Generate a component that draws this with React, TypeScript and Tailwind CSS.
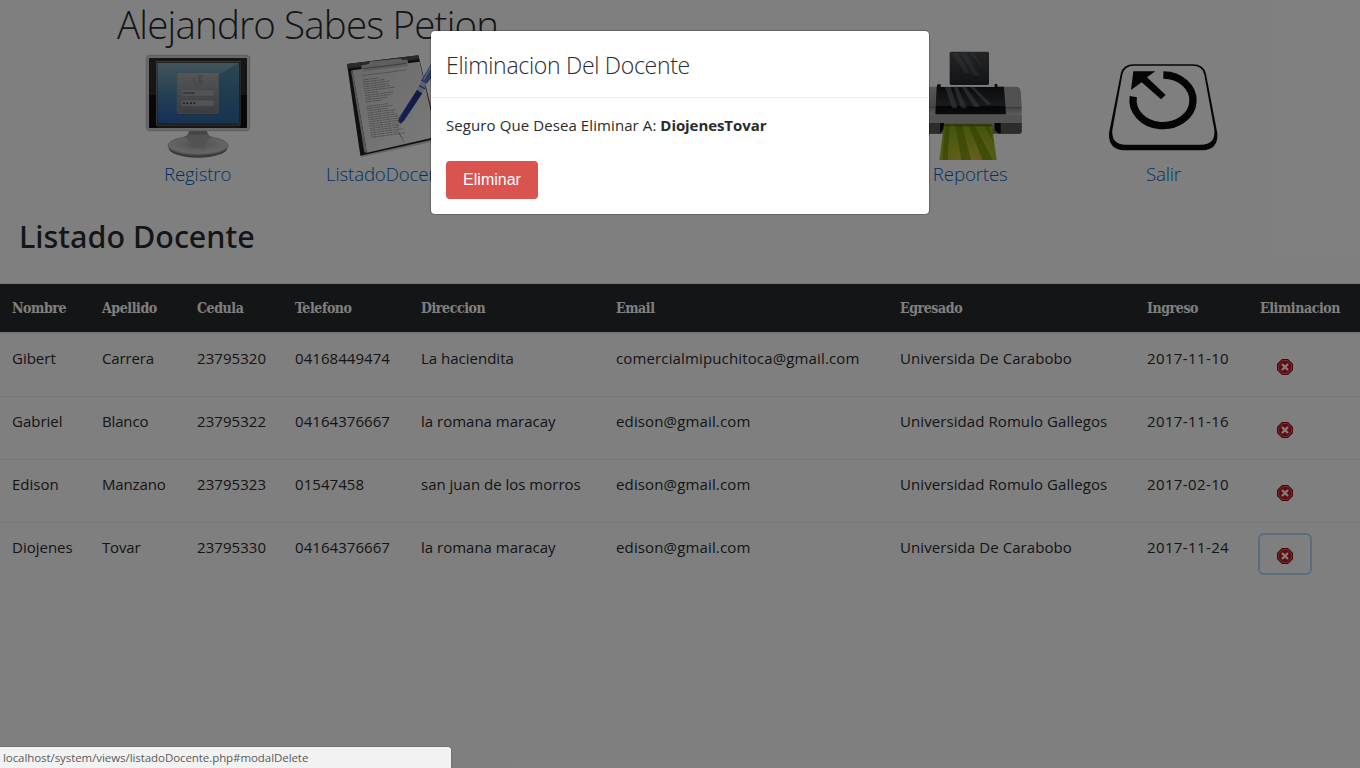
import type { ReactNode } from "react";

function MonitorIcon() {
  return (
    <svg width="120" height="112" viewBox="21 15 360 336">
      <defs>
        <linearGradient id="screen" x1="0" y1="0" x2="0" y2="1">
          <stop offset="0" stopColor="#86acb8" />
          <stop offset="0.5" stopColor="#4c80a8" />
          <stop offset="1" stopColor="#2c60b0" />
        </linearGradient>
        <linearGradient id="panel" x1="0" y1="0" x2="0" y2="1">
          <stop offset="0" stopColor="#a8acac" />
          <stop offset="1" stopColor="#74787c" />
        </linearGradient>
        <radialGradient id="base" cx="0.5" cy="0.4" r="0.6">
          <stop offset="0" stopColor="#a4a4a4" />
          <stop offset="0.8" stopColor="#cccccc" />
          <stop offset="1" stopColor="#989898" />
        </radialGradient>
      </defs>
      <ellipse cx="201" cy="309" rx="88" ry="29" fill="#707070" />
      <ellipse cx="201" cy="302" rx="90" ry="29" fill="url(#base)" stroke="#969696" strokeWidth="2" />
      <path d="M174 254H228Q228 270 244 276Q222 284 221 308H182Q180 284 158 276Q174 270 174 254Z" fill="#a4a4a4" />
      <path d="M174 256H228V269H174Z" fill="#8a8a8a" />
      <rect x="46" y="31" width="310" height="226" rx="10" fill="#d2d2d2" stroke="#bababa" strokeWidth="3" />
      <rect x="54" y="39" width="294" height="210" rx="4" fill="#2c2c2c" />
      <path d="M54 150H76V249H54ZM328 150H348V249H328Z" fill="#101010" />
      <rect x="76" y="50" width="251" height="190" fill="#111" stroke="#a0a0a0" strokeWidth="2" />
      <rect x="79" y="53" width="245" height="183" fill="url(#screen)" />
      <path d="M323 54V236H120Q270 190 262 90Z" fill="#2f6f98" opacity=".5" />
      <rect x="138" y="83" width="127" height="126" rx="4" fill="#345" opacity=".5" />
      <rect x="139" y="84" width="124" height="122" rx="4" fill="url(#panel)" stroke="#c0c0c0" strokeWidth="1" />
      <g fill="none" stroke="#888c8e" strokeWidth="5">
        <path d="M204 91V113M215 91L205 102L215 113" />
        <path d="M191 97A14 14 0 1 0 216 108" strokeDasharray="5 3" />
      </g>
      <rect x="150" y="134" width="100" height="19" rx="4" fill="#a4a6a8" stroke="#74787c" />
      <rect x="150" y="165" width="100" height="19" rx="4" fill="#a4a6a8" stroke="#74787c" />
      <path d="M157 144H191" stroke="#505558" strokeWidth="5" strokeDasharray="4 1" />
      <g fill="#333">
        <circle cx="159" cy="175" r="3" />
        <circle cx="169" cy="175" r="3" />
        <circle cx="180" cy="175" r="3" />
        <circle cx="190" cy="175" r="3" />
      </g>
    </svg>
  );
}

const PAPER_LINES = [132, 0, 46, 66, 80, 74, 78, 92, 40, 84, 76, 66, 50, 0, 66, 78, 60, 84, 78, 86, 92, 88, 96, 80, 90, 84, 96, 80, 100];

function ClipboardIcon() {
  return (
    <svg width="120" height="112" viewBox="60 15 360 336">
      <defs>
        <linearGradient id="pen" x1="0" y1="0" x2="1" y2="0.5">
          <stop offset="0" stopColor="#6c80d8" />
          <stop offset="0.5" stopColor="#2a3c9c" />
          <stop offset="1" stopColor="#1c2870" />
        </linearGradient>
        <linearGradient id="paper" x1="0" y1="0" x2="1" y2="1">
          <stop offset="0" stopColor="#d0d0d0" />
          <stop offset="1" stopColor="#f8f8f8" />
        </linearGradient>
      </defs>
      <path d="M112 62L324 36L385 286L150 337Z" fill="#000" opacity=".2" />
      <path d="M108 57L322 31L382 280L148 332Z" fill="#202020" />
      <path d="M108 57L322 31L324 42L112 70Z" fill="#555" />
      <path d="M124 76L326 50L377 275L168 323Z" fill="url(#paper)" />
      <path d="M124 76L168 323L160 322L120 78Z" fill="#b0b0b0" />
      <path d="M152 63L175 58L178 51L270 42L273 47L288 45L291 64L155 81Z" fill="#bdbdbd" stroke="#ddd" strokeWidth="2" />
      <path d="M158 71L286 55" stroke="#777" strokeWidth="3" />
      {PAPER_LINES.map((w, i) => (
        <path
          key={i}
          d={`M${153 + i} ${92 + i * 6.6}l${w} ${-w * 0.13}`}
          stroke="#8c8c8c"
          strokeWidth="2.4"
          strokeDasharray="6 1.5 9 2 4 1.5"
        />
      ))}
      <path d="M258 250L285 300L268 274Z" fill="#888" />
      <path d="M257 249L264 218L318 134L334 145L280 226Z" fill="url(#pen)" />
      <path d="M257 249L262 230L270 236Z" fill="#ddd" />
      <path d="M318 134L332 105L347 113L334 145Z" fill="#b8c4e0" />
      <path d="M325 122L343 132" stroke="#4056a0" strokeWidth="4" />
      <path d="M330 107L362 53L385 20L398 28L368 90L347 116Z" fill="#5276c8" />
      <path d="M338 104L375 40" stroke="#b0c8f0" strokeWidth="4" />
    </svg>
  );
}

function PrinterIcon() {
  return (
    <svg width="120" height="112" viewBox="-30 15 360 336">
      <defs>
        <linearGradient id="body" x1="0" y1="0" x2="0" y2="1">
          <stop offset="0" stopColor="#b0b0b0" />
          <stop offset="0.45" stopColor="#8c8c8c" />
          <stop offset="0.6" stopColor="#b8b8b8" />
          <stop offset="1" stopColor="#6e6e6e" />
        </linearGradient>
        <linearGradient id="tray" x1="0" y1="0" x2="0" y2="1">
          <stop offset="0" stopColor="#46494e" />
          <stop offset="1" stopColor="#25272b" />
        </linearGradient>
        <linearGradient id="front" x1="0" y1="0" x2="0" y2="1">
          <stop offset="0" stopColor="#101216" />
          <stop offset="0.7" stopColor="#34363c" />
          <stop offset="0.75" stopColor="#0b0c0e" />
          <stop offset="1" stopColor="#18191c" />
        </linearGradient>
        <radialGradient id="sheet" cx="0.5" cy="0.95" r="0.9">
          <stop offset="0" stopColor="#d0c040" />
          <stop offset="0.6" stopColor="#a0b420" />
          <stop offset="1" stopColor="#8cac18" />
        </radialGradient>
      </defs>
      <rect x="89" y="20" width="118" height="100" rx="5" fill="url(#tray)" />
      <path d="M93 24L115 24L150 84L135 84ZM120 23L137 23L178 92L162 92ZM150 23L160 23L195 76Z" fill="#72757a" opacity=".35" />
      <path d="M20 125H290Q300 126 302 140L305 190V260Q305 266 298 266H-2Q-10 266-10 260V190L-4 140Q-2 126 8 125Z" fill="url(#body)" />
      <path d="M255 126H290Q299 126 301 140L304 187H257Z" fill="#a2a2a2" />
      <path d="M-8 188H305" stroke="#666" strokeWidth="2" />
      <path d="M-8 210H305V235H-8Z" fill="#a6a6a6" />
      <path d="M224 234H305V258Q305 266 298 266H235L224 250ZM-10 234H72V250L60 266H-3Q-10 266-10 258Z" fill="#585858" />
      <path d="M224 234H242V265H235L224 255ZM72 234H60V265L72 250Z" fill="#0a0a0a" />
      <path d="M53 118H62V126H224V117H232V125H252L258 208H46L50 125Z" fill="url(#front)" />
      <path d="M75 126H92L112 190H97ZM101 125H112L140 190H124ZM125 125H137L180 186H163ZM150 125H161L213 177L204 181Z" fill="#777a80" opacity=".55" />
      <path d="M72 238H215L230 345H58Z" fill="url(#sheet)" />
      <path d="M76 238H89L83 345H67ZM105 238H126L153 345H124ZM144 238H162L219 345H188ZM190 238H205L221 290Z" fill="#648400" opacity=".6" />
      <path d="M72 238H215L216 244H71Z" fill="#445c10" opacity=".7" />
    </svg>
  );
}

function ExitIcon() {
  return (
    <svg width="120" height="112" viewBox="24 0 360 336">
      <path
        d="M117 43H293Q327 43 333 72L367 250Q370 300 322 301H88Q40 300 42 250L77 72Q83 43 117 43Z"
        fill="#0a0a0a"
      />
      <path
        d="M117 47H293Q322 47 328 74L358 240Q362 284 318 284H92Q48 284 52 240L82 74Q88 47 117 47Z"
        fill="#fff"
      />
      <path d="M205 75A90 76 0 1 1 115 140" fill="none" stroke="#0a0a0a" strokeWidth="22" />
      <path d="M115 64H181L156 82L212 135L198 148L140 97L108 120Z" fill="#0a0a0a" />
    </svg>
  );
}

function DeleteIcon() {
  return (
    <svg width="16" height="16" viewBox="0 0 16 16">
      <path d="M5 0H11L16 5V11L11 16H5L0 11V5Z" fill="#7c0c10" />
      <path d="M5.4 1H10.6L15 5.4V10.6L10.6 15H5.4L1 10.6V5.4Z" fill="#e46066" />
      <path d="M5.8 2H10.2L14 5.8V10.2L10.2 14H5.8L2 10.2V5.8Z" fill="#c4141c" />
      <path d="M5 5L11 11M11 5L5 11" stroke="#fff" strokeWidth="2.4" />
    </svg>
  );
}

function NavItem({ label, children }: { label: string; children: ReactNode }) {
  return (
    <a className="flex flex-col items-center text-[18.7px] leading-7 font-light tracking-[-0.15px] text-[#0263c0]">
      {children}
      <span className="-mt-0.5">{label}</span>
    </a>
  );
}

const HEADERS = ["Nombre", "Apellido", "Cedula", "Telefono", "Direccion", "Email", "Egresado", "Ingreso", "Eliminacion"];
const ROWS = [
  ["Gibert", "Carrera", "23795320", "04168449474", "La haciendita", "comercialmipuchitoca@gmail.com", "Universida De Carabobo", "2017-11-10"],
  ["Gabriel", "Blanco", "23795322", "04164376667", "la romana maracay", "edison@gmail.com", "Universidad Romulo Gallegos", "2017-11-16"],
  ["Edison", "Manzano", "23795323", "01547458", "san juan de los morros", "edison@gmail.com", "Universidad Romulo Gallegos", "2017-02-10"],
  ["Diojenes", "Tovar", "23795330", "04164376667", "la romana maracay", "edison@gmail.com", "Universida De Carabobo", "2017-11-24"],
];
const CELL_TRACKING = ["", "tracking-[-0.15px]", "tracking-[0.06px]", "tracking-[0.06px]", "", "tracking-[0.14px]", "tracking-[0.08px]", "tracking-[0.38px]"];
const COLUMNS = "grid grid-cols-[90px_95px_98px_126px_195px_284px_247px_113px_112px]";

export default function App() {
  return (
    <div className="relative h-[768px] w-[1360px] overflow-hidden bg-white font-['Open_Sans','Noto_Sans',sans-serif] text-[15px] leading-6 text-[#292b2c]">
      <header className="h-[190px]">
        <h1 className="h-[50px] pl-[117px] text-[38.5px] leading-[48px] font-light tracking-[-0.82px]">
          Alejandro Sabes Petion
        </h1>
        <nav className="ml-[101px] grid w-[1159px] grid-cols-6">
          <NavItem label="Registro"><MonitorIcon /></NavItem>
          <NavItem label="ListadoDocente"><ClipboardIcon /></NavItem>
          <span />
          <span />
          <NavItem label="Reportes"><PrinterIcon /></NavItem>
          <NavItem label="Salir"><ExitIcon /></NavItem>
        </nav>
      </header>
      <h2 className="h-[93px] pt-6 pl-[19px] font-['Noto_Sans',sans-serif] text-[30.5px] leading-[44px] font-medium">
        Listado Docente
      </h2>
      <div className="border-t border-[#eceeef]">
        <div className={`${COLUMNS} h-12 bg-[#292b2c] font-['DejaVu_Serif_Condensed','DejaVu_Serif',serif] text-[14px] leading-12 font-bold tracking-[-0.42px] text-white`}>
          {HEADERS.map((h) => (
            <div key={h} className="pl-3">{h}</div>
          ))}
        </div>
        {ROWS.map((row, r) => (
          <div key={r} className={`${COLUMNS} ${r === 0 ? "h-16 border-t-2" : "h-[63px] border-t"} border-[#eceeef] pt-3`}>
            {row.map((cell, i) => (
              <div key={i} className={`pl-3 whitespace-nowrap ${CELL_TRACKING[i]}`}>{cell}</div>
            ))}
            <div className="-mt-0.5 pl-2.5">
              <button className={`flex h-[42px] w-[54px] items-center justify-center rounded-md border-2 pt-1 ${r === 3 ? "border-[#b5dbfb]" : "border-transparent"}`}>
                <DeleteIcon />
              </button>
            </div>
          </div>
        ))}
      </div>
      <div className="absolute inset-0 flex flex-col items-center justify-between bg-black/50">
        <section className="mt-[30px] h-[185px] w-[500px] rounded-[5px] border border-black/20 bg-white bg-clip-padding">
          <h4 className="h-[67px] border-b border-[#eceeef] pt-4 pl-[15px] text-[23px] leading-9 font-light tracking-[-0.3px]">
            Eliminacion Del Docente
          </h4>
          <div className="p-[15px]">
            <p className="mb-6 leading-6">
              <span className="tracking-[0.09px]">Seguro Que Desea Eliminar A:</span> <strong className="tracking-[-0.07px]">DiojenesTovar</strong>
            </p>
            <button className="h-[38px] w-[92px] rounded bg-[#d9534f] font-['Liberation_Sans',Arial,sans-serif] text-base text-white">
              Eliminar
            </button>
          </div>
        </section>
        <footer className="h-[22px] w-[452px] self-start rounded-tr border-t border-r border-[#727272] bg-[#f2f2f2] pl-[3px] text-[11.5px] leading-[21px] tracking-[-0.07px] text-[#5a5a5a]">
          localhost/system/views/listadoDocente.php#modalDelete
        </footer>
      </div>
    </div>
  );
}
